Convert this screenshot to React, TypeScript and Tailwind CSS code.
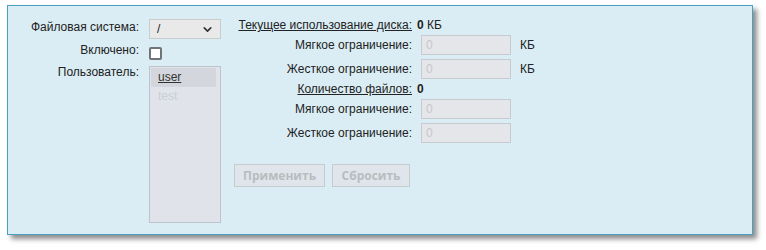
import { FiChevronDown } from 'react-icons/fi';

const font = { fontFamily: '"Liberation Sans", Arial, sans-serif' };

function QuotaRow({ label, unit }: { label: string; unit?: string }) {
  return (
    <div className="flex items-center h-[20px]">
      <div className="w-[176px] text-right pr-0">{label}</div>
      <input
        disabled
        value="0"
        readOnly
        className="ml-[9px] w-[90px] h-[20px] px-[4px] bg-[#e4e6e9] border border-[#c7cbcf] text-[#c4c8cc] text-[12px] outline-none"
      />
      {unit && <span className="ml-[9px]">{unit}</span>}
    </div>
  );
}

export default function App() {
  return (
    <div className="w-[766px] h-[250px] bg-white pt-[5px] pl-[7px]" style={font}>
      <div className="w-[746px] h-[230px] border border-[#4b9fc2] bg-[#daedf4] shadow-[4px_4px_5px_rgba(0,0,0,0.45)] flex pt-[13px] text-[12px] text-[#222]">
        {/* левая колонка */}
        <div className="grid grid-cols-[131px_72px] gap-x-[10px] content-start">
          <div className="text-right leading-[20px] -mt-[2px]">Файловая система:</div>
          <div className="h-[20px] bg-[#e9e9ea] border border-[#cacbcc] flex items-center justify-between pl-[7px] pr-[6px]">
            <span>/</span>
            <FiChevronDown size={13} strokeWidth={3} className="text-[#333]" />
          </div>

          <div className="text-right mt-[7px] leading-[13px] -translate-y-[2px]">Включено:</div>
          <div className="mt-[8px]">
            <div className="w-[13px] h-[13px] bg-white border-2 border-[#6e7478] rounded-[2px]" />
          </div>

          <div className="text-right mt-[5px] leading-[14px]">Пользователь:</div>
          <div className="mt-[6px] h-[157px] bg-[#e0e4ea] border border-[#bcc3ca] pt-[1px] pl-[1px] pr-[4px]">
            <div className="h-[19px] bg-[#d3d7dd] pl-[7px] leading-[19px] text-[#333] underline">user</div>
            <div className="h-[19px] pl-[7px] leading-[19px] text-[#c9ced3]">test</div>
          </div>
        </div>

        {/* правая колонка */}
        <div className="ml-[15px] flex flex-col gap-[4px]">
          <div className="flex items-center h-[12px]">
            <div className="w-[176px] text-right">
              <span className="underline">Текущее использование диска:</span>
            </div>
            <span className="ml-[5px]"><b>0</b> КБ</span>
          </div>
          <QuotaRow label="Мягкое ограничение:" unit="КБ" />
          <QuotaRow label="Жесткое ограничение:" unit="КБ" />
          <div className="flex items-center h-[12px]">
            <div className="w-[176px] text-right">
              <span className="underline">Количество файлов:</span>
            </div>
            <span className="ml-[5px] font-bold">0</span>
          </div>
          <QuotaRow label="Мягкое ограничение:" />
          <QuotaRow label="Жесткое ограничение:" />
          <div className="flex gap-[7px] mt-[17px] -ml-[2px]">
            <button
              disabled
              className="w-[91px] h-[23px] bg-[#dfe5ea] border border-[#c6cbcf] text-[#b8bcc0] font-bold text-[12px]"
              style={{ fontFamily: '"Open Sans", sans-serif' }}
            >
              Применить
            </button>
            <button
              disabled
              className="w-[78px] h-[23px] bg-[#dfe5ea] border border-[#c6cbcf] text-[#b8bcc0] font-bold text-[12px]"
              style={{ fontFamily: '"Open Sans", sans-serif' }}
            >
              Сбросить
            </button>
          </div>
        </div>
      </div>
    </div>
  );
}
